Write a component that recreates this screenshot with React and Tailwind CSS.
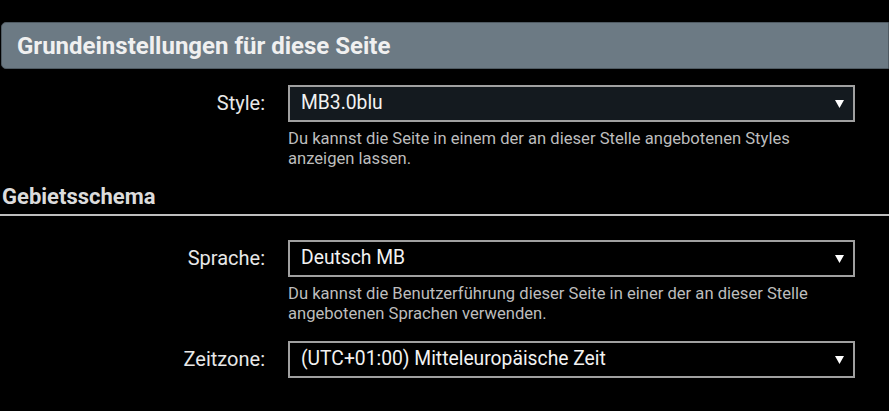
import React from 'react';

// Einstellungszeilen
const Arrow = () => (
  <svg width="9" height="8" viewBox="0 0 9 8" className="shrink-0">
    <polygon points="0,0 9,0 4.5,8" fill="#ffffff" />
  </svg>
);

const SelectRow = ({ label, value, help, dark }) => (
  <div className="flex">
    <div className="w-[265px] shrink-0 text-right text-[20px] leading-[37px] text-[#e8e8e8]">{label}</div>
    <div className="ml-[23px] w-[567px]">
      <div
        className={`flex h-[37px] items-center justify-between border-2 border-[#a0a0a0] pl-[11px] pr-[9px] text-[19.3px] text-[#f2f2f2] ${
          dark ? 'bg-[#141a1f]' : 'bg-black'
        }`}
      >
        <span>{value}</span>
        <Arrow />
      </div>
      {help && (
        <p className="mt-[7px] w-[540px] text-[16.6px] leading-[20px] text-[#bdbdbd]">{help}</p>
      )}
    </div>
  </div>
);

const App = () => {
  return (
    <div className="h-[411px] w-full overflow-hidden bg-black pt-[22px] font-['Roboto',sans-serif]">
      <div className="ml-[1px] flex h-[47px] items-center rounded-l-[5px] border border-[#4f5a62] bg-[#6c7a84] pl-[15px]">
        <h2 className="text-[24px] font-bold text-[#f0f0f0]">Grundeinstellungen für diese Seite</h2>
      </div>

      <div className="mt-[16px]">
        <SelectRow
          label="Style:"
          value="MB3.0blu"
          dark
          help="Du kannst die Seite in einem der an dieser Stelle angebotenen Styles anzeigen lassen."
        />
      </div>

      <div className="mt-[16px] border-b-2 border-[#bdbdbd] pb-[5px] pl-[2px]">
        <h3 className="text-[22px] font-bold leading-[24px] text-[#dcdcdc]">Gebietsschema</h3>
      </div>

      <div className="mt-[24px] space-y-[17px]">
        <SelectRow
          label="Sprache:"
          value="Deutsch MB"
          help="Du kannst die Benutzerführung dieser Seite in einer der an dieser Stelle angebotenen Sprachen verwenden."
        />
        <SelectRow label="Zeitzone:" value="(UTC+01:00) Mitteleuropäische Zeit" />
      </div>
    </div>
  );
};

export default App;
